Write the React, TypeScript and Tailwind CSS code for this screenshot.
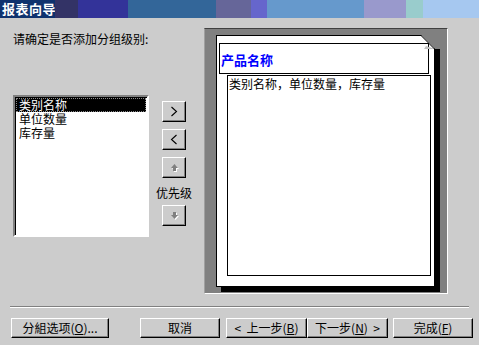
import React from "react";

const btn =
  "flex items-center justify-center bg-[#cccccc] border border-t-white border-l-white border-r-black border-b-black shadow-[inset_-1px_-1px_0_#808080] text-[12px] leading-[14px] text-black";

function Arrow({ up }: { up: boolean }) {
  return (
    <svg width="9" height="9" viewBox="0 0 9 9">
      {up ? (
        <>
          <polygon points="5.5,2 9,6 7,6 7,9 4,9 4,6 2,6" fill="#ffffff" />
          <polygon points="4.5,1 8,5 6,5 6,8 3,8 3,5 1,5" fill="#808080" />
        </>
      ) : (
        <>
          <polygon points="5.5,9 9,5 7,5 7,2 4,2 4,5 2,5" fill="#ffffff" />
          <polygon points="4.5,8 8,4 6,4 6,1 3,1 3,4 1,4" fill="#808080" />
        </>
      )}
    </svg>
  );
}

function Chevron({ right }: { right: boolean }) {
  return (
    <svg width="8" height="11" viewBox="0 0 8 11">
      <polyline
        points={right ? "1.5,1 6.5,5.5 1.5,10" : "6.5,1 1.5,5.5 6.5,10"}
        fill="none"
        stroke="#000"
        strokeWidth="1.1"
      />
    </svg>
  );
}

export default function App() {
  return (
    <div className="w-[479px] h-[345px] bg-[#cccccc] flex flex-col overflow-hidden font-['Noto_Sans_CJK_SC','Liberation_Sans',sans-serif] text-black">
      {/* Title bar */}
      <div className="flex h-[18px] shrink-0">
        <div className="w-[55px] bg-[#0f326e] flex items-center pl-[2px]">
          <span className="text-white font-bold text-[13px] leading-[16px] tracking-[0.5px] whitespace-nowrap">报表向导</span>
        </div>
        <div className="w-[23px] bg-[#333366]" />
        <div className="w-[50px] bg-[#333399]" />
        <div className="w-[88px] bg-[#336699]" />
        <div className="w-[35px] bg-[#666699]" />
        <div className="w-[16px] bg-[#6666cc]" />
        <div className="w-[97px] bg-[#6699cc]" />
        <div className="w-[42px] bg-[#9999cc]" />
        <div className="w-[17px] bg-[#99cccc]" />
        <div className="w-[56px] bg-[#a6c8f0]" />
      </div>

      {/* Main */}
      <div className="flex mt-[10px] h-[266px] shrink-0">
        <div className="w-[204px] pl-[13px] flex flex-col">
          <div className="mt-[4px] text-[12px] leading-[14px] whitespace-nowrap">请确定是否添加分组级别:</div>
          <div className="flex mt-[49px]">
            <div className="w-[136px] h-[142px] bg-white border-2 border-t-[#808080] border-l-[#808080] border-r-white border-b-white shadow-[inset_1px_1px_0_#000] pt-[1px] pl-[1px] text-[12px] leading-[14px]">
              <div className="h-[14px] bg-black text-white pl-[3px] mr-[1px] outline outline-1 outline-dotted outline-[#888888] -outline-offset-1">类别名称</div>
              <div className="h-[14px] pl-[3px]">单位数量</div>
              <div className="h-[14px] pl-[3px]">库存量</div>
            </div>
            <div className="ml-[7px] mt-[6px] w-[36px] flex flex-col items-center">
              <div className={btn + " w-[24px] h-[21px]"}>
                <Chevron right={true} />
              </div>
              <div className={btn + " w-[24px] h-[21px] mt-[7px]"}>
                <Chevron right={false} />
              </div>
              <div className={btn + " w-[24px] h-[21px] mt-[7px]"}>
                <Arrow up={true} />
              </div>
              <div className="mt-[8px] text-[12px] leading-[14px] whitespace-nowrap">优先级</div>
              <div className={btn + " w-[24px] h-[21px] mt-[5px]"}>
                <Arrow up={false} />
              </div>
            </div>
          </div>
        </div>

        {/* Preview panel */}
        <div className="w-[244px] h-[266px] bg-[#808080] border border-t-[#404040] border-l-[#a0a0a0] border-r-white border-b-white pl-[11px] pt-[6px]">
          <div className="relative w-[219px] h-[252px] bg-white border border-black shadow-[5px_5px_0_#000]">
            <div className="ml-[2px] mt-[7px] w-[210px] h-[31px] border border-black pl-[1px] pt-[2px]">
              <span className="text-[#0000ff] font-bold text-[13px] leading-[15px] whitespace-nowrap">产品名称</span>
            </div>
            <div className="ml-[10px] mt-[1px] w-[204px] h-[201px] border border-black pl-[1px] pt-[1px] text-[12px] leading-[14px] whitespace-nowrap">
              类别名称，单位数量，库存量
            </div>
            <svg className="absolute top-[-1px] right-[-6px]" width="19" height="14" viewBox="0 0 19 14">
              <polygon points="0,0 14,0 14,14" fill="#808080" />
              <rect x="14" y="0" width="5" height="14" fill="#808080" />
              <polygon points="5,11 14,14 3,14" fill="#c0c0c0" />
              <line x1="0" y1="0.5" x2="13.5" y2="14" stroke="#000" strokeWidth="1" />
            </svg>
          </div>
        </div>
      </div>

      {/* Separator */}
      <div className="mt-[12px] mx-[10px] h-[2px] border-t border-t-[#808080] border-b border-b-white shrink-0" />

      {/* Bottom buttons */}
      <div className="flex mt-[10px] pl-[11px] h-[20px] shrink-0">
        <div className={btn + " w-[98px] h-[20px] whitespace-nowrap"}>
          分組选项(<span className="underline">O</span>)...
        </div>
        <div className={btn + " w-[80px] h-[20px] ml-[31px]"}>取消</div>
        <div className={btn + " w-[81px] h-[20px] ml-[6px] whitespace-nowrap"}>
          &lt;&nbsp; 上一步(<span className="underline">B</span>)
        </div>
        <div className={btn + " w-[81px] h-[20px] whitespace-nowrap"}>
          下一步(<span className="underline">N</span>)&nbsp; &gt;
        </div>
        <div className={btn + " w-[80px] h-[20px] ml-[5px] whitespace-nowrap"}>
          完成(<span className="underline">F</span>)
        </div>
      </div>
    </div>
  );
}
